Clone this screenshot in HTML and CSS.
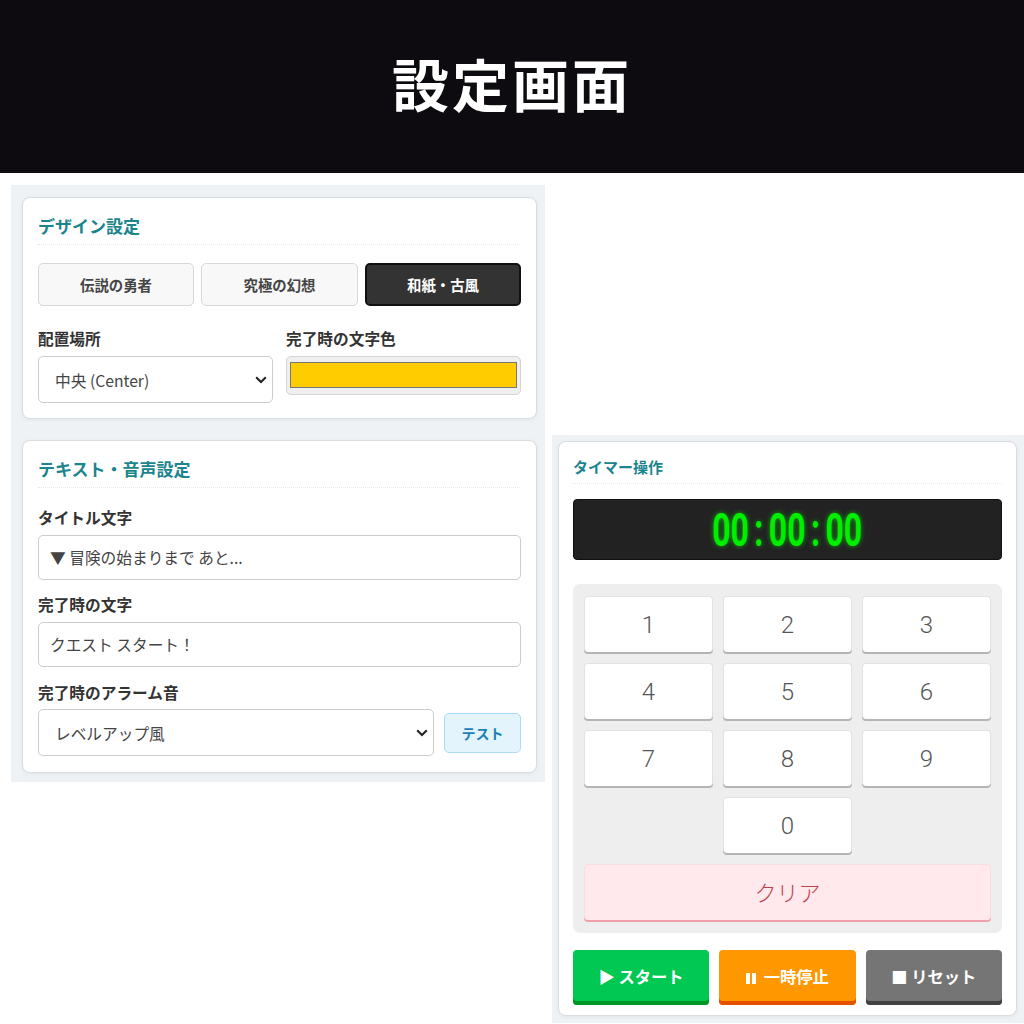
FILE: index.html
```html
<!DOCTYPE html>
<html lang="ja">
<head>
<meta charset="utf-8">
<title>設定画面</title>
<link rel="stylesheet" href="styles.css">
</head>
<body>
<header class="banner"><h1>設定画面</h1></header>
<main class="stage">
  <section class="panel panel-left">
    <div class="card design">
      <h2 class="card-title">デザイン設定</h2>
      <div class="presets">
        <button class="preset">伝説の勇者</button>
        <button class="preset">究極の幻想</button>
        <button class="preset active">和紙・古風</button>
      </div>
      <div class="two-col">
        <div class="field">
          <label class="label">配置場所</label>
          <select class="control select"><option>中央 (Center)</option></select>
        </div>
        <div class="field">
          <label class="label">完了時の文字色</label>
          <input class="color" type="color" value="#ffcc00">
        </div>
      </div>
    </div>
    <div class="card text-card">
      <h2 class="card-title">テキスト・音声設定</h2>
      <label class="label">タイトル文字</label>
      <input class="control text" type="text" value="▼ 冒険の始まりまで あと...">
      <label class="label">完了時の文字</label>
      <input class="control text text-last" type="text" value="クエスト スタート！">
      <label class="label">完了時のアラーム音</label>
      <div class="sound-row">
        <select class="control select"><option>レベルアップ風</option></select>
        <button class="test">テスト</button>
      </div>
    </div>
  </section>
  <section class="panel panel-right">
    <div class="card timer">
      <h2 class="card-title small">タイマー操作</h2>
      <div class="display"><span class="digits">00<span class="colon">:</span>00<span class="colon">:</span>00</span></div>
      <div class="keypad">
        <button class="key">1</button><button class="key">2</button><button class="key">3</button>
        <button class="key">4</button><button class="key">5</button><button class="key">6</button>
        <button class="key">7</button><button class="key">8</button><button class="key">9</button>
        <button class="key zero">0</button>
        <button class="key clear">クリア</button>
      </div>
      <div class="actions">
        <button class="action start">▶ スタート</button>
        <button class="action pause"><span class="pause-icon"></span>一時停止</button>
        <button class="action reset">■ リセット</button>
      </div>
    </div>
  </section>
</main>
</body>
</html>
```
FILE: styles.css
```css
* { box-sizing: border-box; }
html, body { margin: 0; padding: 0; }
body {
  width: 1024px;
  height: 1024px;
  overflow: hidden;
  background: #fff;
  color: #333;
  font-family: "Noto Sans CJK JP", "Noto Sans", sans-serif;
}
button, input, select { font-family: inherit; margin: 0; }

.banner {
  height: 173px;
  background: #0d0b10;
  display: flex;
  align-items: center;
  justify-content: center;
}
.banner h1 {
  margin: 0;
  color: #fff;
  font-size: 57px;
  line-height: 1;
  font-weight: 700;
  letter-spacing: 3px;
  transform: translateY(-4px);
}

.stage {
  height: 851px;
  padding: 12px 0 1px 11px;
  display: flex;
  gap: 7px;
  align-items: flex-start;
}
.panel { background: #eef2f5; }
.panel-left {
  width: 534px;
  height: 597px;
  padding: 12px 8px 8px 11px;
  display: flex;
  flex-direction: column;
  gap: 21px;
}
.panel-right {
  width: 472px;
  height: 588px;
  padding: 6px 7px 6px 6px;
  align-self: flex-end;
}
.card {
  background: #fff;
  border: 1px solid #d8dde2;
  border-radius: 8px;
  padding: 15px 16px 15px 15px;
  box-shadow: 0 1px 4px rgba(0, 0, 0, 0.06);
}
.design { height: 222px; flex: none; }
.text-card { height: 333px; flex: none; padding-right: 15px; }
.timer { height: 575px; padding: 13px 14px; }

.card-title {
  margin: 0 0 18px;
  height: 32px;
  padding-top: 1px;
  font-size: 17px;
  line-height: 24px;
  font-weight: 700;
  color: #1b858e;
  border-bottom: 1px dotted #e6e8ea;
}
.card-title.small {
  font-size: 15px;
  height: 29px;
  line-height: 22px;
  margin-bottom: 15px;
}

.presets {
  display: grid;
  grid-template-columns: 156px 157px 156px;
  gap: 7px;
  margin-bottom: 22px;
}
.preset {
  height: 43px;
  padding: 0;
  background: #f8f8f8;
  border: 1px solid #d6d8da;
  border-radius: 5px;
  color: #444;
  font-size: 14.4px;
  font-weight: 700;
}
.preset.active {
  background: #333;
  border: 2px solid #111;
  color: #fff;
}

.two-col {
  display: grid;
  grid-template-columns: 235px 235px;
  gap: 13px;
}
.label {
  display: block;
  font-size: 15.7px;
  line-height: 22px;
  font-weight: 700;
  color: #333;
  margin-bottom: 6px;
}
.control {
  background: #fff;
  border: 1px solid #ccc;
  border-radius: 5px;
  color: #444;
  font-size: 15.7px;
  width: 100%;
}
.select {
  height: 47px;
  padding: 2px 24px 0 16px;
  appearance: none;
  -webkit-appearance: none;
  background: #fff url("data:image/svg+xml,%3Csvg xmlns='http://www.w3.org/2000/svg' width='12' height='8' viewBox='0 0 12 8'%3E%3Cpath d='M1.2 1.2 6 6l4.8-4.8' fill='none' stroke='%23222' stroke-width='2'/%3E%3C/svg%3E") no-repeat right 5px center;
}
.text { display: block; height: 44.5px; padding: 0 11px; margin-bottom: 14.7px; }
.text-last { margin-bottom: 15.6px; }
.color {
  display: block;
  width: 100%;
  height: 39px;
  padding: 5px 3px 6px;
  background: #efefef;
  border: 1px solid #d4d4d4;
  border-radius: 5px;
}
.color::-webkit-color-swatch-wrapper { padding: 0; }
.color::-webkit-color-swatch { border: 1px solid #777; border-radius: 0; }

.text-card .card-title { margin: 0 1px 19px 0; }
.sound-row {
  display: flex;
  align-items: center;
  gap: 10px;
  margin-top: -1px;
}
.sound-row .select { flex: 1; width: auto; }
.test {
  flex: none;
  width: 77px;
  height: 40px;
  background: #e3f4fd;
  border: 1px solid #aadcf5;
  border-radius: 5px;
  color: #1c80b8;
  font-size: 14px;
  font-weight: 700;
}

.display {
  height: 61px;
  background: #222;
  border: 1px solid #111;
  border-radius: 4px;
  display: flex;
  align-items: center;
  justify-content: center;
  margin-bottom: 24px;
}
.digits {
  display: block;
  font-family: Roboto, "Liberation Sans", sans-serif;
  font-size: 47px;
  font-weight: 700;
  line-height: 1;
  letter-spacing: 0;
  color: #00ee00;
  text-shadow: 0 0 6px rgba(0, 255, 0, 0.65);
  transform: scaleX(0.68);
  white-space: nowrap;
}
.colon { margin: 0 8px; }

.keypad {
  height: 349px;
  background: #eee;
  border-radius: 7px;
  padding: 12px 11px;
  display: grid;
  grid-template-columns: repeat(3, 1fr);
  grid-auto-rows: 56px;
  gap: 11px 10px;
  margin-bottom: 17px;
}
.key {
  padding: 0;
  background: #fff;
  border: 1px solid #e2e2e2;
  border-bottom: 0;
  border-radius: 4px;
  box-shadow: 0 2px 0 #b5b5b5;
  color: #555;
  font-family: Roboto, "Noto Sans CJK JP", sans-serif;
  font-size: 24px;
  font-weight: 300;
}
.zero { grid-column: 2; }
.clear {
  grid-column: 1 / -1;
  padding-bottom: 3px;
  background: #ffe9ec;
  border-color: #fadde0;
  box-shadow: 0 2px 0 #f0a0a8;
  color: #c0404e;
  font-family: "Noto Sans CJK JP", sans-serif;
  font-size: 22px;
}

.actions {
  display: grid;
  grid-template-columns: 136px 136.5px 136.5px;
  column-gap: 10px;
}
.action {
  height: 55px;
  padding: 0 0 4px;
  border: 0;
  border-radius: 4px;
  color: #fff;
  font-size: 16.3px;
  font-weight: 700;
}
.pause-icon {
  display: inline-block;
  width: 10px;
  height: 11px;
  margin-right: 8px;
  border-left: 4px solid #fff;
  border-right: 4px solid #fff;
  vertical-align: -1px;
}
.start { background: #00c853; box-shadow: inset 0 -4px 0 #009624; }
.pause { background: #ff9800; box-shadow: inset 0 -4px 0 #e65100; }
.reset { background: #757575; box-shadow: inset 0 -4px 0 #424242; }
```
